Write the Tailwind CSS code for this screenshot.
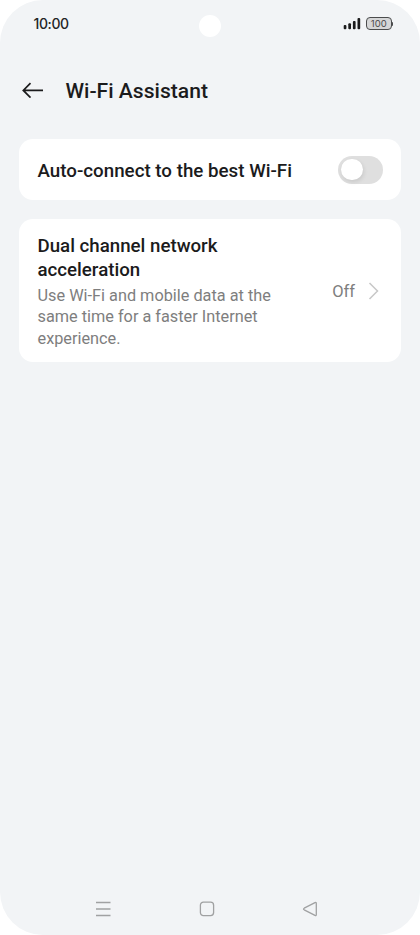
<!DOCTYPE html>
<html lang="en">
<head>
<meta charset="utf-8">
<title>Wi-Fi Assistant</title>
<script src="https://cdn.jsdelivr.net/npm/@tailwindcss/browser@4"></script>
</head>
<body class="bg-white">
<div class="relative flex h-[935px] w-[420px] flex-col overflow-hidden rounded-[43px] bg-[#f2f4f6] font-[Roboto,sans-serif] text-[#1b1b1c]">
  <div class="absolute left-[198.5px] top-[15px] size-[22px] rounded-full bg-white"></div>
  <div class="flex h-[47px] items-center justify-between pl-[33.5px] pr-[27px]">
    <span class="font-[Inter,sans-serif] text-[14px] leading-5 font-medium tracking-[-0.4px] text-[#242526]">10:00</span>
    <div class="flex items-center gap-[5px]">
      <svg class="h-[13px] w-[18px]" viewBox="0 0 18 13" fill="#1b1b1c"><rect x=".7" y="7.9" width="2.7" height="4.4" rx="1"/><rect x="5.3" y="6.3" width="2.7" height="6" rx="1"/><rect x="9.9" y="3.9" width="2.7" height="8.4" rx="1"/><rect x="14.5" y="1" width="2.7" height="11.3" rx="1"/></svg>
      <div class="flex items-center">
        <div class="flex h-[13px] w-[25.5px] items-center justify-center rounded-[4px] border border-[#4b4c4d] bg-[#d5d6d7] font-[Inter,sans-serif] text-[9.5px] leading-none text-[#4b4c4d]">100</div>
        <div class="h-1 w-[1.5px] rounded-r bg-[#4b4c4d]"></div>
      </div>
    </div>
  </div>
  <div class="flex h-[92px] items-center pb-[4px] pl-[22px]">
    <svg class="-mt-[2px] h-4 w-[22px]" viewBox="0 0 22 16" fill="none" stroke="#1b1b1c" stroke-width="1.7"><path d="M21 8.4H1.5M8.5 1.2 1.3 8.4l7.2 7.2"/></svg>
    <h1 class="ml-[21.5px] text-[21.1px] leading-7 font-medium whitespace-nowrap">Wi-Fi Assistant</h1>
  </div>
  <main class="flex flex-col gap-[19px] px-[19px]">
    <section class="flex h-[61px] items-center justify-between rounded-[14px] bg-white px-[18.5px]">
      <span class="pt-[2px] text-[18.75px] leading-6 font-medium whitespace-nowrap">Auto-connect to the best Wi-Fi</span>
      <span class="flex h-7 w-[45px] items-center rounded-full bg-[#dfdfdf] px-[3.5px]"><span class="size-[21.5px] rounded-full bg-white shadow-[1px_2px_4px_rgba(0,0,0,0.1)]"></span></span>
    </section>
    <section class="flex h-[143px] items-center justify-between rounded-[14px] bg-white pl-[18.5px] pr-[22px]">
      <div class="pt-[3px]">
        <h2 class="text-[18.7px] leading-[23.4px] font-medium whitespace-nowrap">Dual channel network<br>acceleration</h2>
        <p class="mt-[3px] text-[16.3px] leading-[21.3px] whitespace-nowrap text-[#7e7e7e]">Use Wi-Fi and mobile data at the<br>same time for a faster Internet<br>experience.</p>
      </div>
      <div class="flex items-center text-[#7e7e7e]">
        <span class="pt-[2px] text-[16.5px] leading-6">Off</span>
        <svg class="ml-[13px] h-[18px] w-[11px]" viewBox="0 0 11 18" fill="none" stroke="#c7c7c7" stroke-width="1.5"><path d="m1.5 1 8 8-8 8"/></svg>
      </div>
    </section>
  </main>
  <nav class="mt-auto flex h-[52px] items-center justify-between pl-[95px] pr-[102px]">
    <svg class="size-4" viewBox="0 0 16 16" fill="none" stroke="#a0a1a2" stroke-width="1.3"><path d="M1 1.5h14.5M1 8h14.5M1 14.5h14.5"/></svg>
    <svg class="size-4" viewBox="0 0 16 16" fill="none" stroke="#a0a1a2" stroke-width="1.3"><rect x="1.4" y="1.2" width="13.2" height="13.4" rx="3"/></svg>
    <svg class="size-4" viewBox="0 0 16 16" fill="none" stroke="#a0a1a2" stroke-width="1.3" stroke-linejoin="round"><path d="M2.2 7.2 13 1.6q1.3-.5 1.3.9v11q0 1.4-1.3.9L2.2 8.8q-1.4-.8 0-1.6Z"/></svg>
  </nav>
</div>
</body>
</html>
